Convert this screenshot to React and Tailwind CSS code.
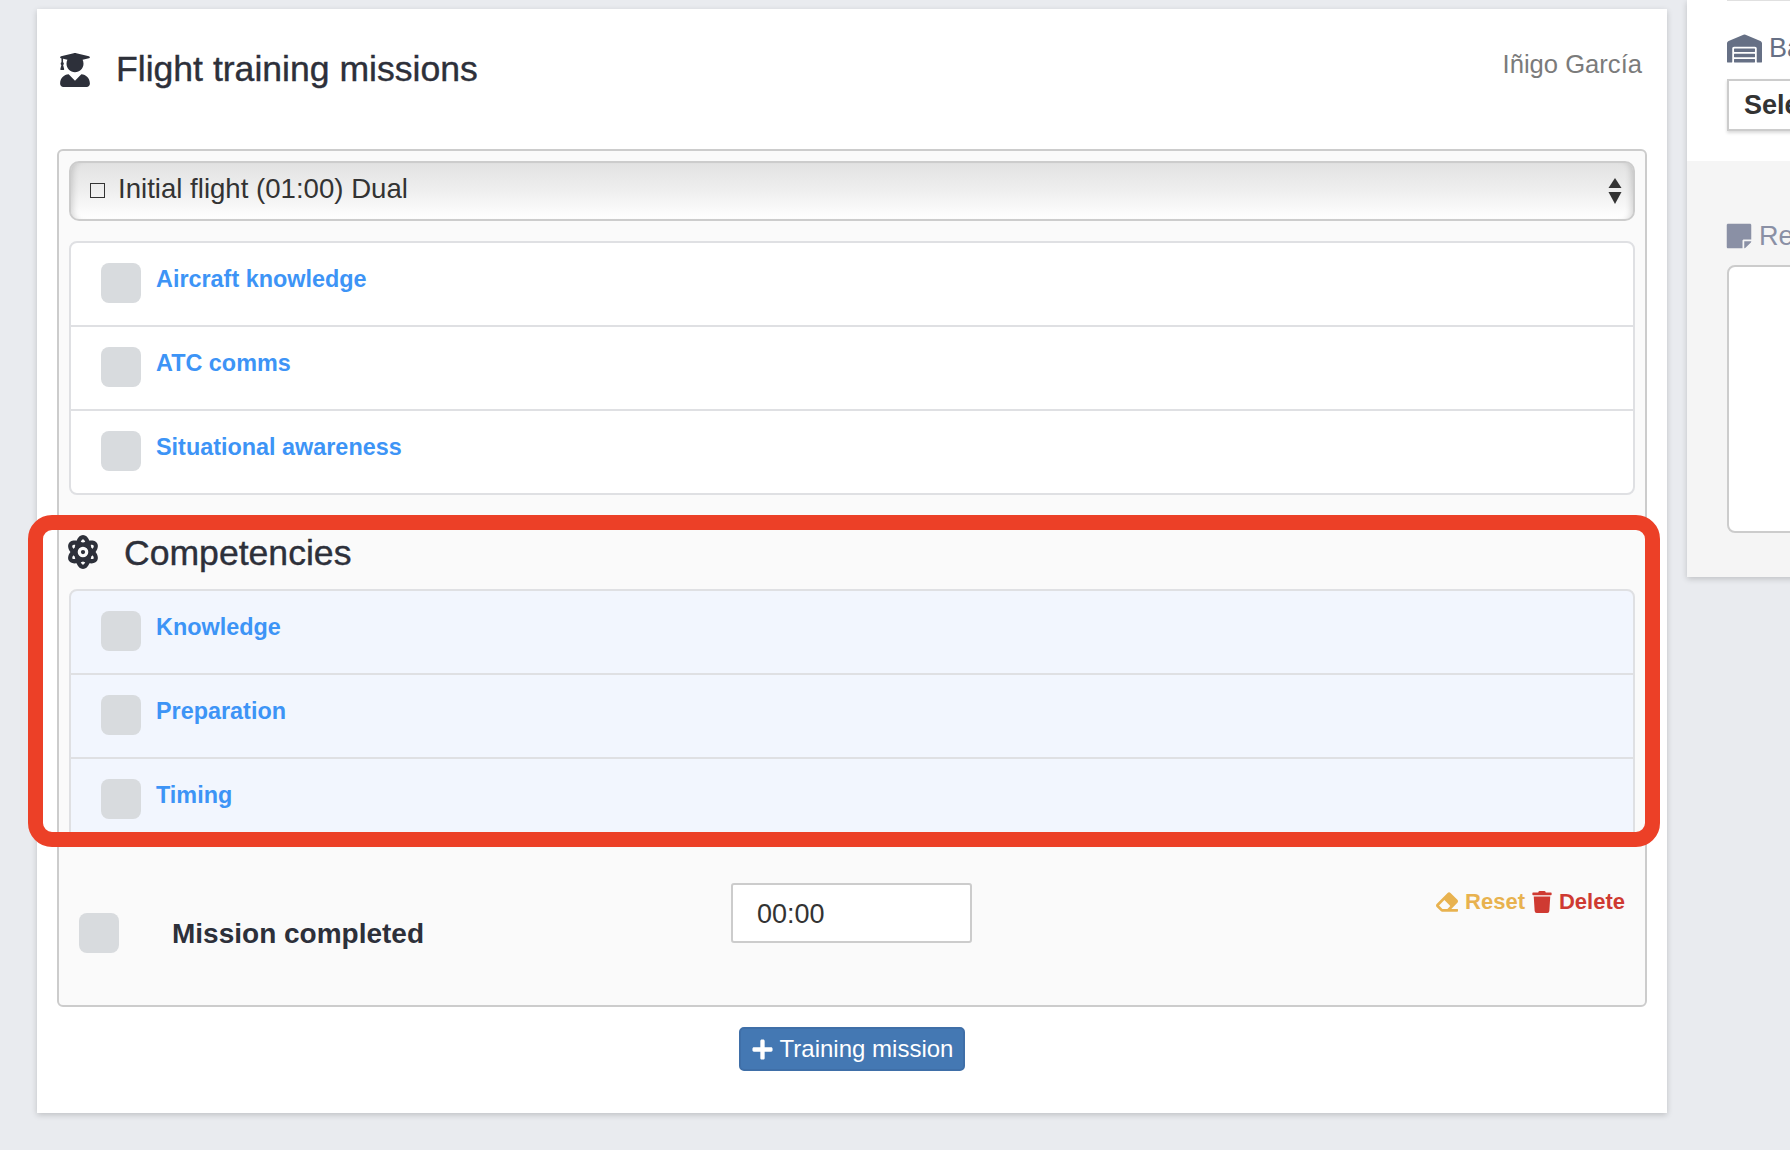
import React from "react";
import { FaUserGraduate, FaAtom, FaEraser, FaTrash, FaWarehouse, FaStickyNote, FaPlus } from "react-icons/fa";

const font = { fontFamily: '"Liberation Sans", Arial, sans-serif' };

function Row({ label, last }) {
  return (
    <div className={`flex h-[84px] items-start pl-[30px] pt-[20px] ${last ? "" : "border-b-2 border-[#dfe0e3]"}`}>
      <span className="block h-[40px] w-[40px] shrink-0 rounded-[8px] bg-[#d8dbde]" />
      <a className="ml-[15px] mt-[1px] text-[23.4px] font-bold leading-[30px] text-[#3d94f6]">{label}</a>
    </div>
  );
}

function List({ items, className }) {
  return (
    <div className={`h-[254px] w-[1566px] overflow-hidden rounded-[8px] border-2 border-[#dfe0e3] ${className}`}>
      {items.map((t, i) => (
        <Row key={t} label={t} last={i === items.length - 1} />
      ))}
    </div>
  );
}

export default function App() {
  return (
    <div style={font} className="relative flex h-[1150px] w-[1790px] items-start gap-[20px] overflow-hidden bg-[#e9ebef] pl-[37px] text-[#2d303a]">
      <main className="mt-[9px] h-[1104px] w-[1630px] shrink-0 bg-white px-[20px] shadow-[0_2px_6px_rgba(0,0,0,0.18)]">
        <header className="flex h-[140px] items-start justify-between">
          <div className="flex items-center pt-[40px]">
            <FaUserGraduate className="ml-[1px] text-[34px] text-[#2d303a]" />
            <h1 className="ml-[24px] mb-[2px] text-[35.6px] leading-[40px] [-webkit-text-stroke:0.4px_#2d303a]">Flight training missions</h1>
          </div>
          <span className="mr-[5px] pt-[39px] text-[25.6px] leading-[32px] text-[#7b7b7b]">Iñigo García</span>
        </header>

        <section className="h-[858px] w-[1590px] rounded-[6px] border-2 border-[#cccccc] bg-[#fafafa] px-[10px] pt-[10px]">
          <div className="flex h-[60px] w-[1566px] items-center rounded-[10px] border-2 border-[#cccccc] bg-gradient-to-b from-[#e2e2e2] via-[#efefef] to-white pl-[19px] pr-[11px] text-[27.6px] text-[#333333] shadow-[inset_7px_0_6px_-5px_rgba(0,0,0,0.15),inset_-7px_0_6px_-5px_rgba(0,0,0,0.15)]">
            <span className="mb-[2px] block h-[15px] w-[15px] border border-[#333333]" />
            <span className="ml-[13px] mb-[5px] flex-1">Initial flight (01:00) Dual</span>
            <svg width="14" height="26" viewBox="0 0 14 26" className="fill-[#333333]">
              <path d="M7 0 L13.5 10 H0.5 Z" />
              <path d="M7 26 L13.5 14 H0.5 Z" />
            </svg>
          </div>

          <List className="mt-[20px] bg-white" items={["Aircraft knowledge", "ATC comms", "Situational awareness"]} />

          <div className="flex h-[94px] items-start pt-[37px]">
            <FaAtom className="mt-[3px] text-[34px] text-[#2d303a] -ml-[3px]" />
            <h2 className="ml-[24px] text-[35.6px] leading-[42px] [-webkit-text-stroke:0.4px_#2d303a]">Competencies</h2>
          </div>

          <List className="bg-[#f2f6fe]" items={["Knowledge", "Preparation", "Timing"]} />

          <div className="flex items-start pl-[10px] pt-[39px]">
            <span className="mt-[31px] block h-[40px] w-[40px] shrink-0 rounded-[8px] bg-[#d8dbde]" />
            <span className="ml-[53px] mt-[34px] w-[559px] text-[28px] font-bold leading-[36px] text-[#2d303a]">Mission completed</span>
            <div className="mt-[1px] flex h-[60px] w-[241px] items-center rounded-[3px] border-2 border-[#cccccc] bg-white pl-[24px] pt-[2px] text-[27px] text-[#333333]">00:00</div>
            <div className="ml-auto mr-[10px] mt-[3px] flex items-center text-[22px] font-bold">
              <FaEraser className="text-[22px] text-[#e8b24f]" />
              <span className="ml-[7px] text-[#e8b24f]">Reset</span>
              <FaTrash className="ml-[6px] text-[22px] text-[#cf3a32]" />
              <span className="ml-[6px] text-[#cf3a32]">Delete</span>
            </div>
          </div>
        </section>

        <div className="flex justify-center pt-[20px]">
          <button className="flex h-[44px] w-[226px] items-center justify-center rounded-[5px] border-2 border-[#3f6fa8] bg-[#4478b3] text-[24px] text-white">
            <FaPlus className="mr-[6px] text-[23px]" />
            Training mission
          </button>
        </div>
      </main>

      <aside className="h-[577px] w-[500px] shrink-0 bg-[#f5f5f5] shadow-[0_2px_6px_rgba(0,0,0,0.18)]">
        <div className="h-[161px] bg-white pl-[40px]">
          <div className="h-[1px] w-[400px] bg-[#e0e0e0]" />
          <div className="mt-[33px] flex h-[28px] items-center text-[27px] text-[#667085]">
            <FaWarehouse className="text-[35px] text-[#667085]" />
            <span className="ml-[7px]">Base</span>
          </div>
          <div className="mt-[17px] flex h-[52px] w-[400px] items-center border-2 border-[#cccccc] bg-white pl-[15px] text-[27px] font-bold text-[#333333] shadow-[0_2px_3px_rgba(0,0,0,0.15)]">Select</div>
        </div>
        <div className="pl-[40px] pt-[61px]">
          <div className="flex items-center text-[27px] leading-[26px] text-[#8a90a5]">
            <FaStickyNote className="-ml-[2px] text-[28px]" />
            <span className="ml-[6px]">Remarks</span>
          </div>
          <div className="mt-[15px] h-[268px] w-[400px] rounded-[8px] border-2 border-[#cccccc] bg-white" />
        </div>
      </aside>

      <div className="pointer-events-none absolute left-[28px] top-[515px] h-[332px] w-[1632px] rounded-[24px] border-[15px] border-[#ec4027]" />
    </div>
  );
}
